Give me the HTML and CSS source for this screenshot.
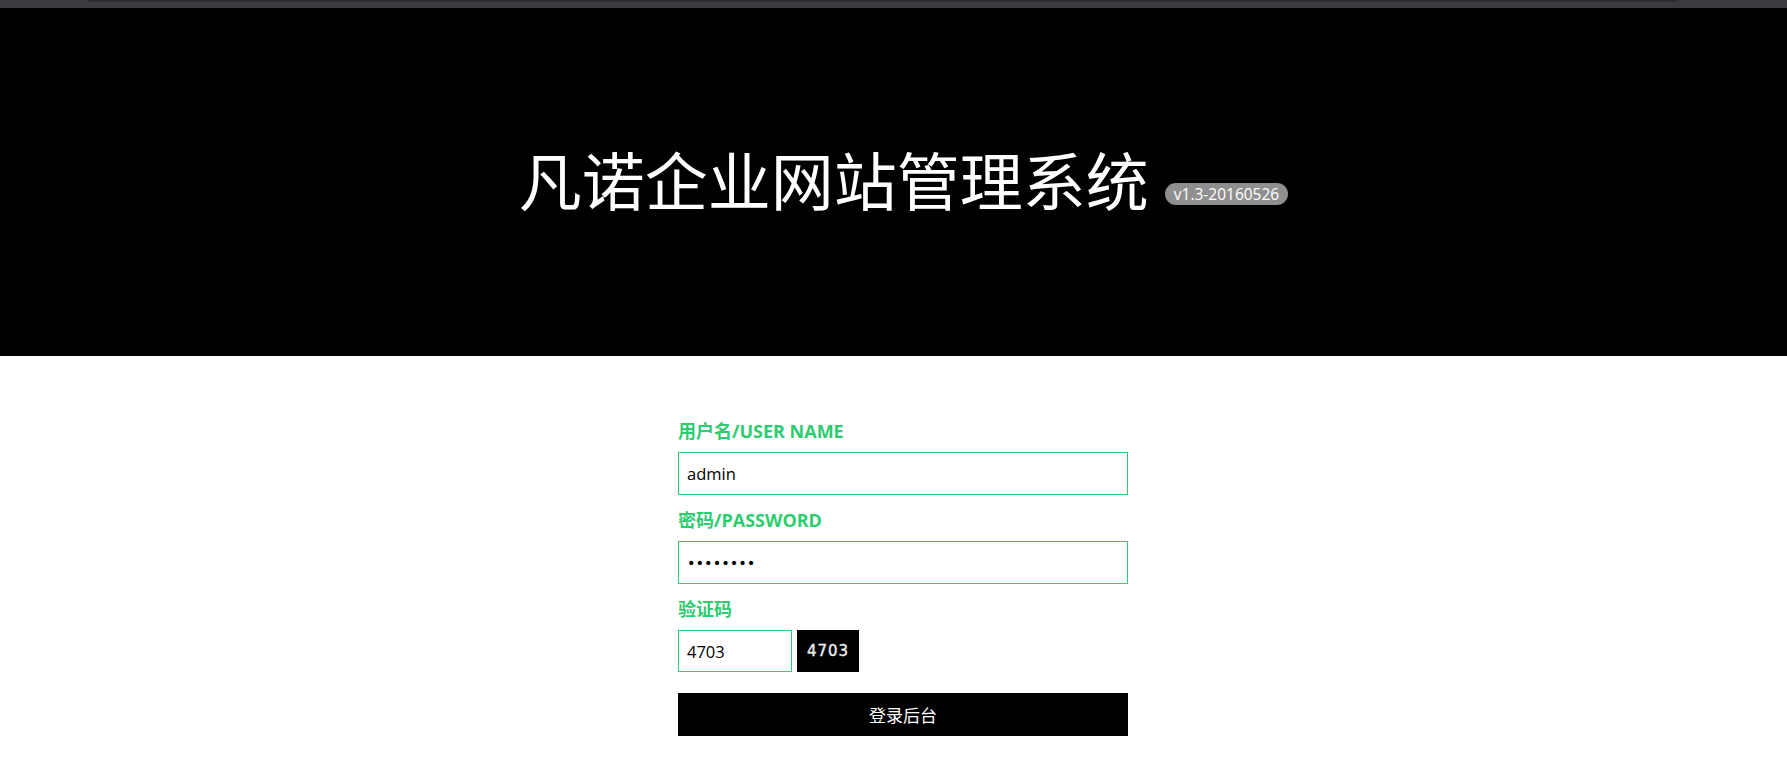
FILE: index.html
```html
<!DOCTYPE html>
<html lang="zh-CN">
<head>
<meta charset="utf-8">
<title>凡诺企业网站管理系统</title>
<link rel="stylesheet" href="styles.css">
</head>
<body>
<div class="chrome"><div class="chrome-bar"></div></div>
<header class="hero">
  <div class="hero-inner">
    <h1 class="title">凡诺企业网站管理系统</h1>
    <span class="badge">v1.3-20160526</span>
  </div>
</header>
<main class="login">
  <form class="login-form">
    <div class="field">
      <label class="label" for="user">用户名/USER NAME</label>
      <input class="input" id="user" type="text" value="admin">
    </div>
    <div class="field">
      <label class="label" for="pass">密码/PASSWORD</label>
      <input class="input input-pass" id="pass" type="password" value="12345678">
    </div>
    <div class="field">
      <label class="label" for="code">验证码</label>
      <div class="captcha-row">
        <input class="input input-code" id="code" type="text" value="4703">
        <span class="captcha">4703</span>
      </div>
    </div>
    <button class="submit" type="button">登录后台</button>
  </form>
</main>
</body>
</html>
```
FILE: styles.css
```css
html, body {
  margin: 0;
  padding: 0;
  background: #ffffff;
}
body {
  font-family: "Open Sans", "Noto Sans CJK SC", sans-serif;
  color: #000;
}
.chrome {
  height: 8px;
  background: #3a3b3f;
  padding: 0 110px 0 88px;
}
.chrome-bar {
  height: 2px;
  background: #2a2a2d;
  border-radius: 0 0 4px 4px;
}
.hero {
  height: 348px;
  background: #000;
  display: flex;
  align-items: center;
  justify-content: center;
  padding-left: 20px;
}
.hero-inner {
  display: flex;
  align-items: flex-end;
  gap: 16px;
  margin-top: -8px;
}
.title {
  margin: 0;
  font-family: "Noto Sans CJK SC", sans-serif;
  font-weight: 400;
  font-size: 63px;
  line-height: 72px;
  color: #fff;
}
.badge {
  display: inline-block;
  height: 22px;
  line-height: 22px;
  padding: 0 9px;
  border-radius: 11px;
  background: #8f8f8f;
  color: #fff;
  font-size: 15.5px;
  margin-bottom: 9px;
}
.login {
  width: 450px;
  margin: 0 auto;
  padding: 63px 0 0 19px;
}
.login-form {
  display: flex;
  flex-direction: column;
}
.field {
  margin-bottom: 13px;
}
.label {
  display: block;
  font-size: 18px;
  font-weight: 700;
  line-height: 24px;
  color: #2ecc71;
  margin-bottom: 9px;
}
.input {
  display: block;
  box-sizing: border-box;
  width: 450px;
  height: 43px;
  margin: 0;
  padding: 0 8px;
  border: 1px solid #2ecc71;
  border-radius: 0;
  outline: none;
  font-family: "Open Sans", sans-serif;
  font-size: 16.5px;
  color: #000;
  background: #fff;
}
.input-pass {
  font-family: "DejaVu Sans", sans-serif;
  font-size: 14.5px;
}
.captcha-row {
  display: flex;
  gap: 5px;
}
.input-code {
  width: 114px;
  height: 42px;
}
.captcha {
  width: 62px;
  height: 42px;
  background: #000;
  color: #eee;
  font-family: "DejaVu Sans", sans-serif;
  font-weight: 400;
  font-size: 15px;
  letter-spacing: 1px;
  -webkit-text-stroke: 0.4px #eee;
  display: flex;
  align-items: center;
  justify-content: center;
}
.submit {
  margin-top: 8px;
  width: 450px;
  height: 43px;
  border: 0;
  border-radius: 0;
  background: #000;
  color: #fff;
  font-family: "Noto Sans CJK SC", sans-serif;
  font-weight: 400;
  font-size: 17px;
  cursor: pointer;
}
```
